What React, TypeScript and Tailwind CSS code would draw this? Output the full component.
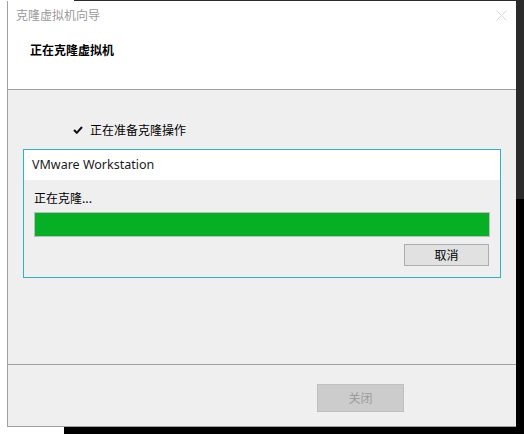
const cjk = "font-['Microsoft_YaHei','Noto_Sans_CJK_SC',sans-serif]";

const CheckMark = () => (
  <svg width="10" height="8" viewBox="0 0 10 8" className="shrink-0">
    <path d="M1 4 L3.8 6.8 L9 1" fill="none" stroke="#111" strokeWidth="2" />
  </svg>
);

const CloseX = () => (
  <svg width="11" height="11" viewBox="0 0 11 11">
    <path d="M0.5 0.5 L10.5 10.5 M10.5 0.5 L0.5 10.5" stroke="#d6d6d6" strokeWidth="1" />
  </svg>
);

// progress popup that sits inside the wizard page
const CloneProgress = () => (
  <div className="ml-[15px] w-[478px] border border-[#2ab3c3] flex flex-col">
    <div className="h-[30px] bg-white flex items-center pl-[8px]">
      <span className="text-[12.5px] leading-4 text-[#1b1b1b] font-['Noto_Sans',sans-serif]">
        VMware Workstation
      </span>
    </div>
    <div className="bg-[#efefef] flex flex-col pl-[10px] pr-[10px] pt-[10px] pb-[11px]">
      <p className={`${cjk} text-[12px] leading-4 text-black`}>正在克隆...</p>
      <div className="mt-[6px] h-[25px] border border-[#bcbcbc] bg-[#e6e6e6]">
        <div className="h-full bg-[#06b025]" style={{ width: "100%" }} />
      </div>
      <div className="mt-[7px] flex justify-end pr-px">
        <button
          className={`${cjk} w-[85px] h-[22px] bg-[#e1e1e1] border border-[#adadad] text-[12px] leading-4 text-black`}
        >
          取消
        </button>
      </div>
    </div>
  </div>
);

export default function App() {
  return (
    <div className="w-[524px] h-[434px] bg-white flex flex-col overflow-hidden">
      <div className="h-px flex shrink-0">
        <div className="w-[74px] bg-white" />
        <div className="flex-1 bg-[#2b2b2b]" />
      </div>

      <div className="h-[426px] flex shrink-0">
        <div className="w-[7px] bg-white" />

        {/* wizard window */}
        <div className="w-[509px] flex flex-col border-l border-b border-[#a0a0a0] bg-white">
          <header className="h-[89px] shrink-0 bg-white border-b border-[#a0a0a0] flex flex-col">
            <div className="flex items-center justify-between pl-[8px] pr-[9px] pt-[6px]">
              <span className={`${cjk} text-[12px] leading-4 text-[#9a9a9a]`}>克隆虚拟机向导</span>
              <CloseX />
            </div>
            <h1 className={`${cjk} mt-[19px] pl-[22px] text-[12px] leading-4 font-bold text-black`}>
              正在克隆虚拟机
            </h1>
          </header>

          <section className="h-[275px] shrink-0 bg-[#efefef] border-b border-[#a0a0a0] flex flex-col">
            <div className="pt-[32px] pl-[65px] flex items-center gap-[7px]">
              <CheckMark />
              <span className={`${cjk} text-[12px] leading-4 text-black`}>正在准备克隆操作</span>
            </div>
            <div className="mt-[11px]">
              <CloneProgress />
            </div>
          </section>

          <footer className="flex-1 bg-[#efefef] flex justify-end items-start pr-[112px] pt-[19px]">
            <button
              disabled
              className={`${cjk} w-[87px] h-[28px] bg-[#cccccc] border border-[#bfbfbf] text-[12px] leading-4 text-[#9b9b9b]`}
            >
              关闭
            </button>
          </footer>
        </div>

        <div className="flex-1 flex flex-col">
          <div className="h-[198px] bg-[#2b2b2b]" />
          <div className="flex-1 bg-black" />
        </div>
      </div>

      <div className="flex-1 flex">
        <div className="w-[64px] bg-white" />
        <div className="flex-1 bg-black" />
      </div>
    </div>
  );
}
